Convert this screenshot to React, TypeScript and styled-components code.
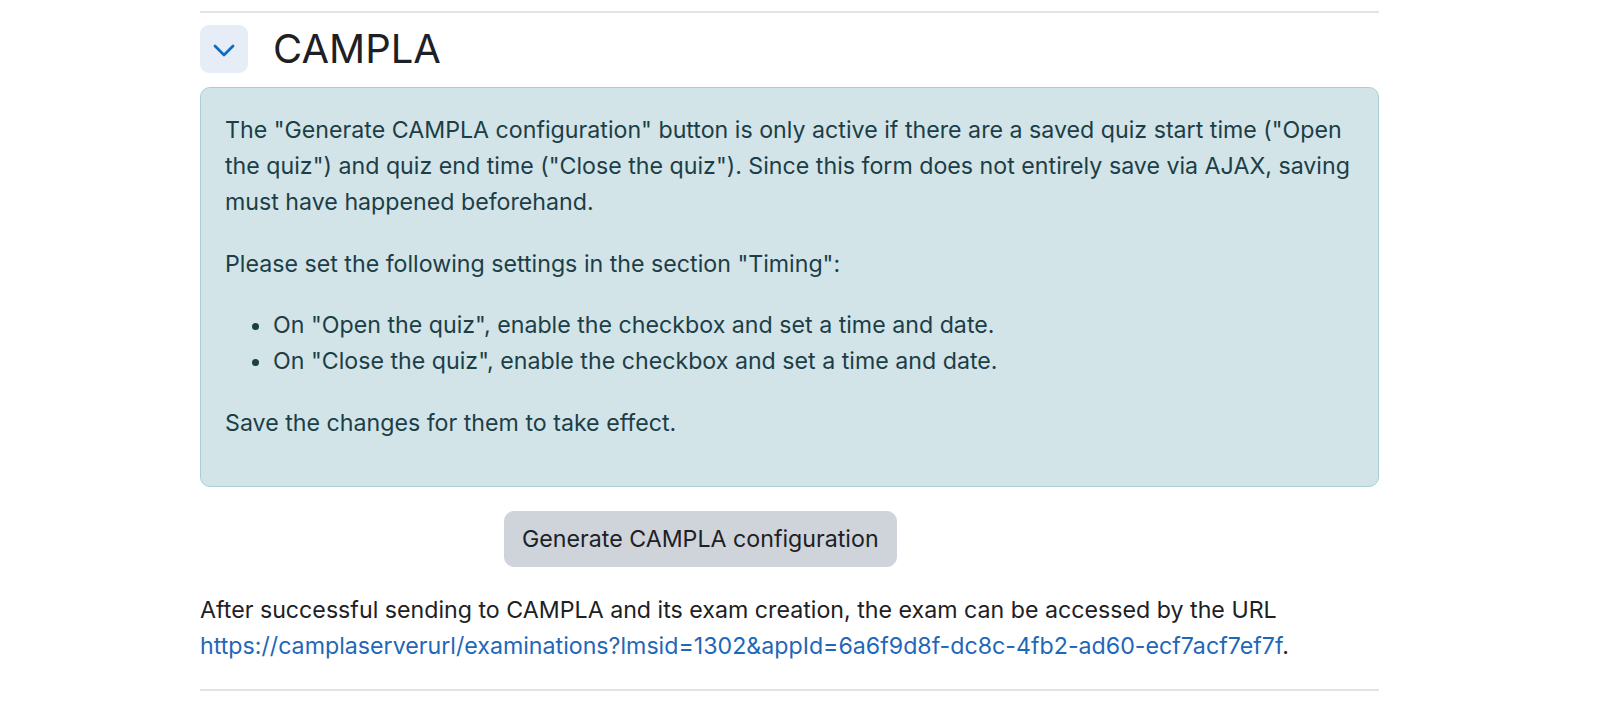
import React from "react";
import styled, { createGlobalStyle } from "styled-components";

const GlobalStyle = createGlobalStyle`
  html, body {
    margin: 0;
    padding: 0;
    background: #ffffff;
  }
  body {
    font-family: Inter, "Noto Sans", "Liberation Sans", sans-serif;
    font-size: 23.2px;
    line-height: 36px;
    color: #1d2125;
  }
`;

const Page = styled.div`
  width: 1179px;
  margin: 0 0 0 200px;
  padding-top: 11px;
`;

const Section = styled.section`
  border-top: 2px solid #e1e4e7;
  border-bottom: 2px solid #e1e4e7;
  padding: 12px 0 25px;
`;

const Header = styled.div`
  display: flex;
  align-items: center;
  gap: 25px;
  margin-bottom: 14px;
`;

const Toggle = styled.button`
  width: 48px;
  height: 48px;
  border: none;
  border-radius: 9px;
  background: #e7edf6;
  display: flex;
  align-items: center;
  justify-content: center;
  padding: 2px 0 0;
  color: #0f6cbf;
  cursor: pointer;
`;

const Title = styled.h3`
  margin: 0;
  font-size: 40px;
  font-weight: 400;
  line-height: 1.2;
  color: #1d2125;
`;

const Alert = styled.div`
  background: #d2e4e8;
  border: 1px solid #a9ced5;
  border-radius: 10px;
  color: #1c3e47;
  padding: 24px 24px 20px;
`;

const Para = styled.p`
  margin: 0 0 25.6px;
`;

const List = styled.ul`
  margin: 0 0 25.6px;
  padding-left: 48px;
`;

const ButtonRow = styled.div`
  display: flex;
  padding-left: 304px;
  margin: 24px 0 25px;
`;

const Button = styled.button`
  font-family: inherit;
  font-size: 23.2px;
  line-height: 36px;
  color: #1d2125;
  background: #ced4da;
  border: 1px solid #ced4da;
  border-radius: 10px;
  padding: 9px 17px;
  cursor: pointer;
`;

const Note = styled.p`
  margin: 0;
  color: #1d2125;
`;

const Link = styled.a`
  color: #1f67b8;
  text-decoration: none;
`;

function Chevron() {
  return (
    <svg width="22" height="13" viewBox="0 0 22 13" fill="none">
      <path
        d="M2 2 L11 11 L20 2"
        stroke="currentColor"
        strokeWidth="2.8"
        strokeLinecap="round"
        strokeLinejoin="round"
      />
    </svg>
  );
}

export default function App() {
  const url =
    "https://camplaserverurl/examinations?lmsid=1302&appId=6a6f9d8f-dc8c-4fb2-ad60-ecf7acf7ef7f";
  return (
    <>
      <GlobalStyle />
      <Page>
        <Section>
          <Header>
            <Toggle aria-label="Collapse">
              <Chevron />
            </Toggle>
            <Title>CAMPLA</Title>
          </Header>
          <Alert>
            <Para>
              The "Generate CAMPLA configuration" button is only active if there are a saved quiz
              start time ("Open the quiz") and quiz end time ("Close the quiz"). Since this form
              does not entirely save via AJAX, saving must have happened beforehand.
            </Para>
            <Para>Please set the following settings in the section "Timing":</Para>
            <List>
              <li>On "Open the quiz", enable the checkbox and set a time and date.</li>
              <li>On "Close the quiz", enable the checkbox and set a time and date.</li>
            </List>
            <Para>Save the changes for them to take effect.</Para>
          </Alert>
          <ButtonRow>
            <Button>Generate CAMPLA configuration</Button>
          </ButtonRow>
          <Note>
            After successful sending to CAMPLA and its exam creation, the exam can be accessed by
            the URL <Link href="#">{url}</Link>.
          </Note>
        </Section>
      </Page>
    </>
  );
}
